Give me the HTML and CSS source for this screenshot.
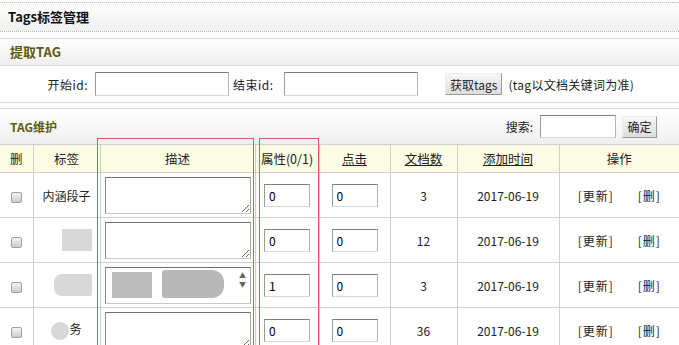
FILE: index.html
```html
<!DOCTYPE html>
<html lang="zh-CN">
<head>
    <meta charset="UTF-8">
    <title>Tags标签管理</title>
    <link rel="stylesheet" href="styles.css">
</head>
<body>
    <div class="page">
        <div class="main-title">Tags标签管理</div>

        <div class="panel-head">提取TAG</div>
        <div class="fetch-row">
            <label class="lbl-start">开始id:</label>
            <input type="text" class="txt id-input">
            <label class="lbl-end">结束id:</label>
            <input type="text" class="txt id-input">
            <button class="btn btn-fetch">获取tags</button>
            <span class="hint">(tag以文档关键词为准)</span>
        </div>
        <div class="sep"></div>

        <div class="panel-head tag-head">
            <span>TAG维护</span>
            <div class="search">
                <span>搜索:</span>
                <input type="text" class="txt search-input">
                <button class="btn btn-ok">确定</button>
            </div>
        </div>

        <table class="tags">
            <colgroup>
                <col style="width:33px"><col style="width:67px"><col style="width:155px"><col style="width:64px">
                <col style="width:71px"><col style="width:67px"><col style="width:102px"><col style="width:120px">
            </colgroup>
            <thead>
                <tr>
                    <th>删</th>
                    <th>标签</th>
                    <th>描述</th>
                    <th>属性(0/1)</th>
                    <th><a href="#">点击</a></th>
                    <th><a href="#">文档数</a></th>
                    <th><a href="#">添加时间</a></th>
                    <th>操作</th>
                </tr>
            </thead>
            <tbody>
                <tr>
                    <td><span class="chk"></span></td>
                    <td>内涵段子</td>
                    <td><textarea class="desc"></textarea></td>
                    <td><input type="text" class="txt num" value="0"></td>
                    <td><input type="text" class="txt num" value="0"></td>
                    <td>3</td>
                    <td>2017-06-19</td>
                    <td class="ops"><a href="#">[更新]</a><a href="#">[删]</a></td>
                </tr>
                <tr>
                    <td><span class="chk"></span></td>
                    <td><span class="smudge s-a"></span></td>
                    <td><textarea class="desc"></textarea></td>
                    <td><input type="text" class="txt num" value="0"></td>
                    <td><input type="text" class="txt num" value="0"></td>
                    <td>12</td>
                    <td>2017-06-19</td>
                    <td class="ops"><a href="#">[更新]</a><a href="#">[删]</a></td>
                </tr>
                <tr>
                    <td><span class="chk"></span></td>
                    <td><span class="smudge s-b"></span></td>
                    <td>
                        <div class="desc desc-fake">
                            <div class="fake-text">
                                <span class="smudge s-c"></span>
                                <span class="smudge s-d"></span>
                            </div>
                            <div class="fake-bar"><span>▲</span><span>▼</span></div>
                        </div>
                    </td>
                    <td><input type="text" class="txt num" value="1"></td>
                    <td><input type="text" class="txt num" value="0"></td>
                    <td>3</td>
                    <td>2017-06-19</td>
                    <td class="ops"><a href="#">[更新]</a><a href="#">[删]</a></td>
                </tr>
                <tr>
                    <td><span class="chk"></span></td>
                    <td><span class="smudge s-e"></span>务</td>
                    <td><textarea class="desc"></textarea></td>
                    <td><input type="text" class="txt num" value="0"></td>
                    <td><input type="text" class="txt num" value="0"></td>
                    <td>36</td>
                    <td>2017-06-19</td>
                    <td class="ops"><a href="#">[更新]</a><a href="#">[删]</a></td>
                </tr>
            </tbody>
        </table>

        <!-- 标注框 -->
        <div class="mark mark-desc"></div>
        <div class="mark mark-attr"></div>
    </div>
</body>
</html>
```

FILE: styles.css
```css
body {
    margin: 0;
    padding: 0;
    background-color: #ffffff;
    font-family: "Noto Sans CJK SC", "DejaVu Sans", sans-serif;
    font-size: 12px;
    color: #222;
    overflow: hidden;
}
.page {
    position: relative;
    width: 679px;
    height: 345px;
    overflow: hidden;
}
.main-title {
    margin-top: 2px;
    height: 28px;
    line-height: 28px;
    padding-left: 8px;
    border-top: 1px dotted #bdbdb0;
    border-bottom: 1px dotted #bdbdb0;
    background: linear-gradient(#ffffff, #eeeeee);
    font-size: 13px;
    font-weight: bold;
    color: #111;
}
.panel-head {
    margin-top: 6px;
    height: 26px;
    line-height: 26px;
    padding-left: 10px;
    border-top: 1px solid #d8d8d8;
    border-bottom: 1px solid #d8d8d8;
    background: linear-gradient(#ffffff, #efefef);
    font-size: 13px;
    font-weight: bold;
    color: #5c5c14;
}
.fetch-row {
    height: 36px;
    display: flex;
    align-items: center;
    white-space: nowrap;
}
.lbl-start {
    width: 88px;
    text-align: right;
    margin-right: 7px;
    letter-spacing: 0.5px;
}
.lbl-end {
    width: 47px;
    margin-left: 4px;
    margin-right: 4px;
    letter-spacing: 0.5px;
}
.txt {
    box-sizing: border-box;
    border: 1px solid;
    border-color: #7f7f7f #b5b5b5 #d8d8d8 #9a9a9a;
    background: #fff;
    font-family: inherit;
    font-size: 12px;
    padding: 0 4px;
    margin: 0;
    outline: none;
}
.id-input {
    width: 134px;
    height: 24px;
}
.btn {
    box-sizing: border-box;
    height: 22px;
    padding: 0 4px;
    border: 1px solid;
    border-color: #eeeeee #9a9a9a #9a9a9a #eeeeee;
    background: linear-gradient(#f7f7f7, #dcdcdc);
    font-family: inherit;
    font-size: 12px;
    color: #222;
    white-space: nowrap;
}
.btn-fetch {
    margin-left: 27px;
}
.hint {
    margin-left: 6px;
    letter-spacing: 0.3px;
}
.sep {
    height: 5px;
    border-top: 1px solid #d8d8d8;
}
.tag-head {
    margin-top: 0;
    height: 35px;
    line-height: normal;
    border-bottom: none;
    display: flex;
    align-items: center;
    justify-content: space-between;
    font-size: 12px;
}
.search {
    display: flex;
    align-items: center;
    margin-right: 22px;
    font-weight: normal;
    color: #222;
}
.search-input {
    width: 76px;
    height: 23px;
    margin-left: 7px;
}
.btn-ok {
    width: 35px;
    margin-left: 6px;
    padding: 0;
}
.tags {
    width: 679px;
    table-layout: fixed;
    border-collapse: collapse;
}
.tags th,
.tags td {
    border: 1px solid #cfcfcf;
    text-align: center;
    padding: 0;
    font-weight: normal;
}
.tags tr > :first-child {
    border-left: none;
}
.tags tr > :last-child {
    border-right: none;
}
.tags th {
    height: 27px;
    background-color: #fbfce3;
    font-size: 12.5px;
}
.tags th a,
.tags td a {
    color: #222;
}
.tags td {
    height: 44px;
}
.chk {
    display: inline-block;
    width: 9px;
    height: 9px;
    border: 1px solid #a0a0a0;
    border-radius: 2px;
    background: linear-gradient(#f4f4f4, #cdcdcd);
    vertical-align: middle;
}
.desc {
    box-sizing: border-box;
    display: block;
    width: 146px;
    height: 37px;
    margin: 0 auto;
    border: 1px solid;
    border-color: #6f6f6f #a8a8a8 #c8c8c8 #8a8a8a;
    resize: both;
    font-family: inherit;
    font-size: 12px;
}
.desc-fake {
    display: flex;
    background: #fff;
}
.fake-text {
    flex: 1;
    position: relative;
}
.fake-bar {
    width: 14px;
    display: flex;
    flex-direction: column;
    align-items: center;
    font-size: 7px;
    color: #666;
    line-height: 9px;
    padding-top: 3px;
}
.num {
    width: 46px;
    height: 23px;
}
.ops a {
    text-decoration: none;
    margin: 0 12px;
    letter-spacing: 1px;
}
.smudge {
    display: inline-block;
    background-color: #d8d8d8;
    filter: blur(0.6px);
    vertical-align: middle;
}
.s-a {
    width: 30px;
    height: 22px;
    margin-left: 20px;
}
.s-b {
    width: 38px;
    height: 22px;
    margin-left: 12px;
    border-radius: 8px 2px 2px 8px;
}
.s-c {
    position: absolute;
    left: 6px;
    top: 4px;
    width: 40px;
    height: 26px;
    background-color: #bcbcbc;
}
.s-d {
    position: absolute;
    left: 56px;
    top: 2px;
    width: 62px;
    height: 28px;
    background-color: #b8b8b8;
    border-radius: 3px 12px 12px 3px;
}
.s-e {
    width: 18px;
    height: 18px;
    border-radius: 50%;
}
.mark {
    position: absolute;
    top: 138px;
    height: 220px;
    border: 1px solid #d85a5a;
    pointer-events: none;
}
.mark-desc {
    left: 97px;
    width: 155px;
}
.mark-attr {
    left: 259px;
    width: 58px;
}
```
